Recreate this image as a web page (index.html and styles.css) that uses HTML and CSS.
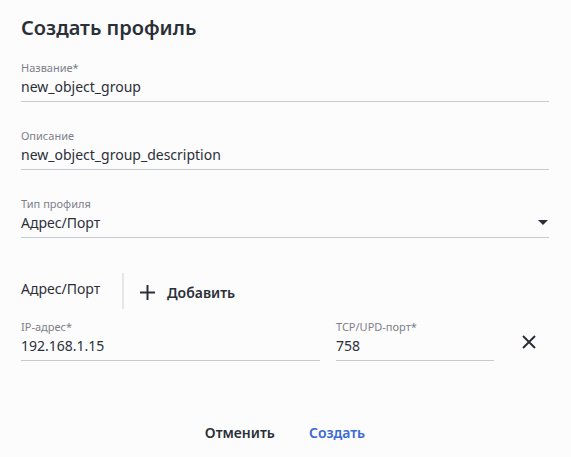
FILE: index.html
```html
<!DOCTYPE html>
<html lang="ru">
<head>
<meta charset="utf-8">
<link rel="stylesheet" href="styles.css">
</head>
<body>
<div class="dialog">
  <h1 class="title">Создать профиль</h1>
  <div class="field">
    <div class="label">Название*</div>
    <div class="value">new_object_group</div>
  </div>
  <div class="field">
    <div class="label">Описание</div>
    <div class="value">new_object_group_description</div>
  </div>
  <div class="field select">
    <div class="label">Тип профиля</div>
    <div class="value">Адрес/Порт
      <svg class="caret" width="10" height="5" viewBox="0 0 10 5"><path d="M0 0H10L5 5Z" fill="#2b2f38"/></svg>
    </div>
  </div>
  <div class="section">
    <div class="section-title">Адрес/Порт</div>
    <div class="divider"></div>
    <div class="add">
      <svg width="15" height="15" viewBox="0 0 15 15"><path d="M7.5 0V15M0 7.5H15" stroke="#2b2f38" stroke-width="2"/></svg>
      <span>Добавить</span>
    </div>
  </div>
  <div class="row">
    <div class="field ip">
      <div class="label">IP-адрес*</div>
      <div class="value">192.168.1.15</div>
    </div>
    <div class="field port">
      <div class="label">TCP/UPD-порт*</div>
      <div class="value">758</div>
    </div>
    <div class="remove">
      <svg width="14" height="14" viewBox="0 0 14 14"><path d="M1 1L13 13M13 1L1 13" stroke="#2b2f38" stroke-width="2"/></svg>
    </div>
  </div>
  <div class="footer">
    <button class="btn">Отменить</button>
    <button class="btn primary">Создать</button>
  </div>
</div>
</body>
</html>
```
FILE: styles.css
```css
html, body {
  margin: 0;
  padding: 0;
  background: #fcfcfc;
}
body {
  font-family: "Noto Sans", "Open Sans", sans-serif;
  color: #2b2f38;
}
.dialog {
  width: 571px;
  height: 457px;
  box-sizing: border-box;
  padding: 14px 22px 0 21px;
}
.title {
  margin: 0 0 19px 0;
  font-size: 20px;
  line-height: 28px;
  font-weight: 600;
}
.field {
  border-bottom: 1px solid #c8cad2;
  margin-bottom: 27px;
}
.label {
  font-size: 11px;
  line-height: 14px;
  color: #7c808a;
}
.value {
  font-size: 14px;
  line-height: 24px;
  padding-bottom: 2px;
  position: relative;
}
.caret {
  position: absolute;
  right: 1px;
  top: 9px;
}
.section {
  display: flex;
  align-items: center;
  height: 36px;
  margin-top: 35px;
  margin-bottom: 11px;
}
.section-title {
  font-size: 14px;
  width: 101px;
  margin-bottom: 6px;
}
.divider {
  width: 2px;
  align-self: stretch;
  background: #e6e6ea;
}
.add {
  display: flex;
  align-items: center;
  gap: 12px;
  margin-left: 16px;
  font-size: 14px;
  font-weight: 600;
  margin-top: 2px;
}
.row {
  display: flex;
  align-items: flex-start;
}
.row .field { margin-bottom: 0; }
.ip { width: 299px; }
.port { width: 158px; margin-left: 16px; }
.remove {
  margin-left: 28px;
  margin-top: 15px;
  display: flex;
}
.footer {
  display: flex;
  justify-content: center;
  gap: 2px;
  margin-top: 56px;
}
.btn {
  font-family: inherit;
  font-size: 14px;
  font-weight: 600;
  background: none;
  border: none;
  padding: 6px 16px;
  color: #2b2f38;
}
.btn.primary { color: #3b69d6; }
```
